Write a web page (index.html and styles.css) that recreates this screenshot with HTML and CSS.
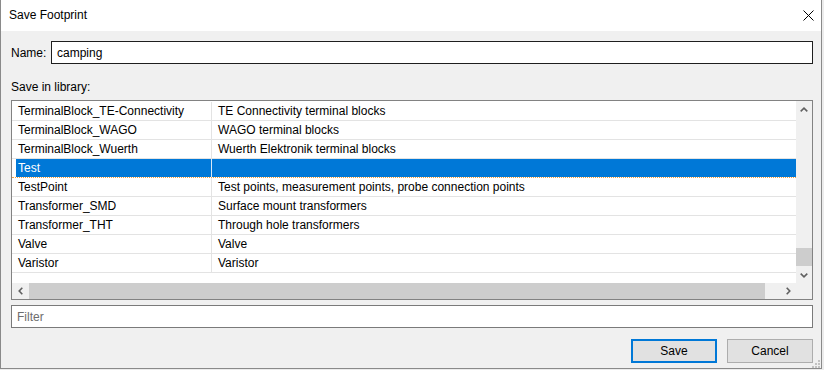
FILE: index.html
```html
<!DOCTYPE html>
<html>
<head>
<meta charset="utf-8">
<link rel="stylesheet" href="styles.css">
</head>
<body>
<div class="window">
  <div class="titlebar">
    <span class="title">Save Footprint</span>
    <svg class="close" width="11" height="11" viewBox="0 0 11 11"><path d="M0.5 0.5 L10.5 10.5 M10.5 0.5 L0.5 10.5" stroke="#000" stroke-width="1" fill="none"/></svg>
  </div>
  <div class="content">
    <div class="name-row">
      <label class="name-label">Name:</label>
      <div class="input name-input">camping</div>
    </div>
    <div class="lib-label">Save in library:</div>
    <div class="listbox">
      <div class="view">
        <div class="rows">
          <div class="row"><div class="c1">TerminalBlock_TE-Connectivity</div><div class="c2">TE Connectivity terminal blocks</div></div>
          <div class="row"><div class="c1">TerminalBlock_WAGO</div><div class="c2">WAGO terminal blocks</div></div>
          <div class="row"><div class="c1">TerminalBlock_Wuerth</div><div class="c2">Wuerth Elektronik terminal blocks</div></div>
          <div class="row sel"><div class="c1">Test</div><div class="c2"></div></div>
          <div class="row"><div class="c1">TestPoint</div><div class="c2">Test points, measurement points, probe connection points</div></div>
          <div class="row"><div class="c1">Transformer_SMD</div><div class="c2">Surface mount transformers</div></div>
          <div class="row"><div class="c1">Transformer_THT</div><div class="c2">Through hole transformers</div></div>
          <div class="row"><div class="c1">Valve</div><div class="c2">Valve</div></div>
          <div class="row"><div class="c1">Varistor</div><div class="c2">Varistor</div></div>
        </div>
      </div>
      <div class="vscroll">
        <div class="sbtn"><svg width="8" height="5" viewBox="0 0 8 5"><polyline points="0.7,4.3 4,1.2 7.3,4.3" fill="none" stroke="#606060" stroke-width="1.6"/></svg></div>
        <div class="vtrack"><div class="vthumb"></div></div>
        <div class="sbtn"><svg width="8" height="5" viewBox="0 0 8 5"><polyline points="0.7,0.7 4,3.8 7.3,0.7" fill="none" stroke="#606060" stroke-width="1.6"/></svg></div>
      </div>
      <div class="hscroll">
        <div class="sbtn"><svg width="5" height="8" viewBox="0 0 5 8"><polyline points="4.3,0.7 1.2,4 4.3,7.3" fill="none" stroke="#606060" stroke-width="1.6"/></svg></div>
        <div class="htrack"><div class="hthumb"></div></div>
        <div class="sbtn"><svg width="5" height="8" viewBox="0 0 5 8"><polyline points="0.7,0.7 3.8,4 0.7,7.3" fill="none" stroke="#606060" stroke-width="1.6"/></svg></div>
      </div>
      <div class="corner"></div>
    </div>
    <div class="input filter">Filter</div>
    <div class="buttons">
      <button class="btn default">Save</button>
      <button class="btn">Cancel</button>
    </div>
  </div>
  <svg class="grip" width="9" height="9" viewBox="0 0 9 9">
    <rect x="7" y="1" width="2" height="2" fill="#c2c2c2"/>
    <rect x="4" y="4" width="2" height="2" fill="#c2c2c2"/>
    <rect x="7" y="4" width="2" height="2" fill="#c2c2c2"/>
    <rect x="1" y="7" width="2" height="2" fill="#c2c2c2"/>
    <rect x="4" y="7" width="2" height="2" fill="#c2c2c2"/>
    <rect x="7" y="7" width="2" height="2" fill="#c2c2c2"/>
  </svg>
</div>
</body>
</html>
```
FILE: styles.css
```css
* { box-sizing: border-box; }
html, body {
  margin: 0;
  padding: 0;
  background: #ececec;
  font-family: "Liberation Sans", Arial, sans-serif;
  font-size: 12px;
  color: #000;
}
.window {
  position: relative;
  width: 822px;
  height: 369px;
  background: #f0f0f0;
  border-left: 1px solid #8a8a8a;
  border-right: 1px solid #8a8a8a;
  border-bottom: 1px solid #8a8a8a;
  box-shadow: 0 1px 0 #1c1c1c;
  display: flex;
  flex-direction: column;
}
.titlebar {
  height: 31px;
  background: #fff;
  display: flex;
  align-items: center;
  justify-content: space-between;
  padding: 0 7px 1px 8px;
}
.title { font-size: 12px; }
.close { display: block; }
.content {
  display: flex;
  flex-direction: column;
  padding: 10px 8px 0 10px;
}
.name-row {
  display: flex;
  align-items: center;
  height: 23px;
}
.name-label { width: 40px; }
.input {
  height: 23px;
  background: #fff;
  display: flex;
  align-items: center;
}
.name-input {
  flex: 1;
  border: 1px solid #1e1e1e;
  padding-left: 5px;
}
.lib-label {
  margin-top: 15px;
  height: 16px;
  line-height: 16px;
  margin-bottom: 5px;
}
.listbox {
  height: 200px;
  border: 1px solid #828282;
  display: grid;
  grid-template-columns: 784px 16px;
  grid-template-rows: 182px 16px;
  background: #f0f0f0;
}
.view {
  background: #fff;
  overflow: hidden;
}
.rows {
  padding-top: 1px;
  width: 840px;
}
.row {
  display: flex;
  height: 19px;
  border-bottom: 1px solid #e3e3e3;
}
.c1 {
  width: 200px;
  padding-left: 6px;
  border-right: 1px solid #e3e3e3;
  line-height: 18px;
  white-space: nowrap;
}
.c2 {
  flex: 1;
  padding-left: 6px;
  line-height: 18px;
  white-space: nowrap;
}
.row.sel {
  border-bottom: 1px dotted #f5a040;
}
.row.sel .c1 {
  background: linear-gradient(to right, #fff 0 4px, #0078d7 4px);
  color: #fff;
  border-right-color: #d8e8f6;
}
.row.sel .c2 { background: #0078d7; }
.vscroll {
  display: flex;
  flex-direction: column;
  background: #f0f0f0;
}
.sbtn {
  width: 16px;
  height: 16px;
  display: flex;
  align-items: center;
  justify-content: center;
  flex: none;
}
.sbtn svg { display: block; }
.vtrack {
  flex: 1;
  display: flex;
  flex-direction: column;
  justify-content: flex-end;
  padding-bottom: 1px;
}
.vthumb {
  height: 18px;
  background: #cdcdcd;
}
.hscroll {
  display: flex;
  background: #f0f0f0;
}
.htrack {
  flex: 1;
  display: flex;
  padding-left: 1px;
}
.hthumb {
  width: 736px;
  background: #cdcdcd;
}
.corner { background: #f0f0f0; }
.filter {
  margin-top: 5px;
  border: 1px solid #7a7a7a;
  padding-left: 5px;
  color: #6d6d6d;
}
.buttons {
  margin-top: 11px;
  display: flex;
  justify-content: flex-end;
  gap: 10px;
}
.btn {
  width: 86px;
  height: 24px;
  background: #e1e1e1;
  border: 1px solid #adadad;
  font-family: inherit;
  font-size: 12px;
  color: #000;
  padding: 0;
  margin: 0;
}
.btn.default {
  border: 2px solid #0078d7;
}
.grip {
  position: absolute;
  right: 1px;
  bottom: 0;
}
```
